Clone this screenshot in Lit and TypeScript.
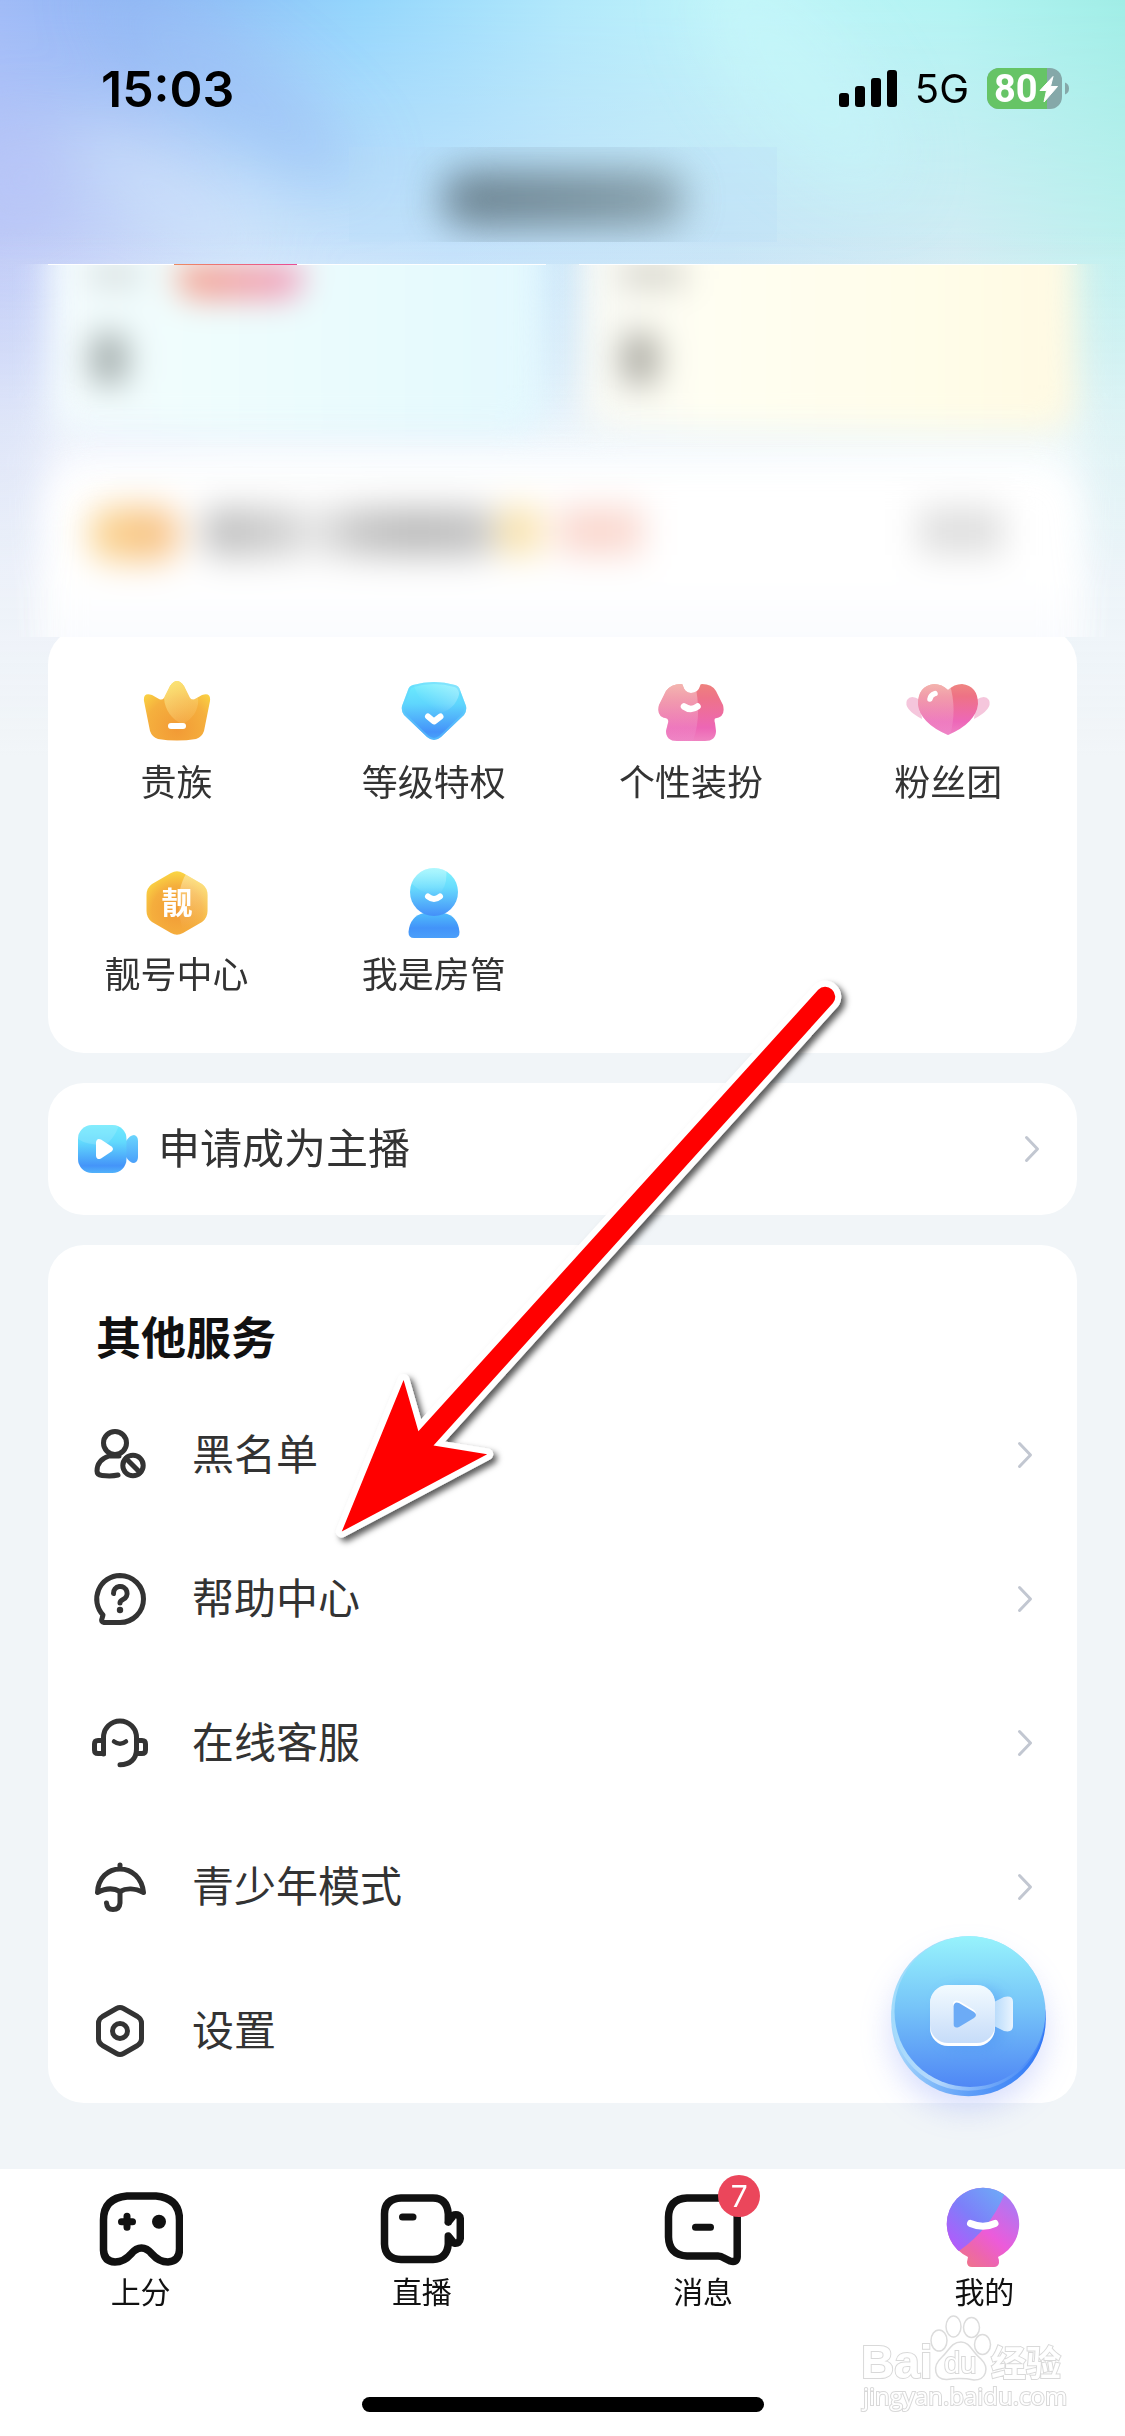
import { LitElement, html, svg, css, type TemplateResult } from "lit";
import { customElement } from "lit/decorators.js";

type Entry = { label: string; icon: TemplateResult };

const perks: Entry[] = [
  {
    label: "贵族",
    icon: html`<svg class="perk-icon" viewBox="0 0 84 84" aria-hidden="true">
      <defs>
        <radialGradient id="crownFill" cx="0.5" cy="0.72" r="0.62">
          <stop offset="0" stop-color="#f29a35" /><stop offset="0.6" stop-color="#f5b03e" /><stop offset="1" stop-color="#fbdc45" />
        </radialGradient>
        <linearGradient id="crownShine" x1="0.2" y1="0" x2="0.6" y2="1">
          <stop offset="0" stop-color="#fbea7e" /><stop offset="1" stop-color="#fbd88a" stop-opacity="0.15" />
        </linearGradient>
        <clipPath id="crownClip"><path d="M35 17Q42 7 49 17L55 29Q57 31.500 60 30L67 26Q76 23 75 32L69 62Q67 68 61 70Q42 73 23 70Q17 68 15 62L9 32Q8 23 17 26L24 30Q27 31.500 29 29Z" /></clipPath>
      </defs>
      <g clip-path="url(#crownClip)">
        <rect width="84" height="84" fill="url(#crownFill)" />
        <path d="M29 0V29C30 42 37 50 47 55C60 50 66 36 62 24V0Z" fill="url(#crownShine)" />
      </g>
      <rect x="33" y="54" width="18" height="6" rx="3" fill="#fff" />
    </svg>`,
  },
  {
    label: "等级特权",
    icon: html`<svg class="perk-icon" viewBox="0 0 84 84" aria-hidden="true">
      <defs>
        <linearGradient id="gemFill" x1="0" y1="0.15" x2="0" y2="0.9">
          <stop offset="0" stop-color="#6deefd" /><stop offset="0.35" stop-color="#5fd6fd" /><stop offset="0.8" stop-color="#4492f9" /><stop offset="1" stop-color="#4bb0fb" />
        </linearGradient>
        <linearGradient id="gemShine" x1="1" y1="0" x2="0.1" y2="0.9">
          <stop offset="0" stop-color="#fff" stop-opacity="0.45" /><stop offset="0.8" stop-color="#fff" stop-opacity="0" />
        </linearGradient>
        <clipPath id="gemClip"><path d="M21 16Q42 10 63 16Q67 17 68 21L74 37Q75 42 72 46L49 68Q42 74 35 68L12 46Q9 42 10 37L16 21Q17 17 21 16Z" /></clipPath>
      </defs>
      <g clip-path="url(#gemClip)">
        <rect width="84" height="84" fill="url(#gemFill)" />
        <path d="M20 10H68V20C67 32 60 41 48 44C34 40 24 28 20 10Z" fill="url(#gemShine)" />
        <path d="M21 16Q42 10 63 16Q67 17 68 21L74 37Q75 42 72 46L49 68Q42 74 35 68L12 46Q9 42 10 37L16 21Q17 17 21 16Z" fill="none" stroke="#62d2fd" stroke-width="4" opacity="0.45" />
      </g>
      <path d="M36 47.500L42 52.500L48.500 47.500" fill="none" stroke="#fff" stroke-width="6" stroke-linecap="round" stroke-linejoin="round" />
    </svg>`,
  },
  {
    label: "个性装扮",
    icon: html`<svg class="perk-icon" viewBox="0 0 84 84" aria-hidden="true">
      <defs>
        <linearGradient id="shirtFill" x1="0" y1="0.1" x2="0" y2="0.9">
          <stop offset="0" stop-color="#ee8878" /><stop offset="0.3" stop-color="#ee7388" /><stop offset="0.75" stop-color="#ed66b5" /><stop offset="1" stop-color="#f08cc4" />
        </linearGradient>
        <linearGradient id="shirtShine" x1="0" y1="0.1" x2="0" y2="1">
          <stop offset="0" stop-color="#f7d6c4" stop-opacity="0.75" /><stop offset="1" stop-color="#ee8bd0" stop-opacity="0.25" />
        </linearGradient>
        <clipPath id="shirtClip"><path d="M32 15Q34 15 34 17Q36 24 42 24Q49 24 51 17Q51 15 53 15Q63 15 67 22L74 36Q77 48 66 49.500Q65 51 66 54L67 62Q67 72 56 72H28Q17 72 17 62L19 54Q20 51 18 49.500Q7 48 10 36L17 22Q22 15 32 15Z" /></clipPath>
      </defs>
      <g clip-path="url(#shirtClip)">
        <rect width="84" height="84" fill="url(#shirtFill)" />
        <path d="M0 0H42C50 25 52 50 44 72H0Z" fill="url(#shirtShine)" />
      </g>
      <path d="M35 37.500Q42 42.500 48.500 37.500" fill="none" stroke="#fff" stroke-width="6.500" stroke-linecap="round" />
    </svg>`,
  },
  {
    label: "粉丝团",
    icon: html`<svg class="perk-icon" viewBox="0 0 84 84" aria-hidden="true">
      <defs>
        <linearGradient id="heartFill" x1="0" y1="0.1" x2="0" y2="0.85">
          <stop offset="0" stop-color="#ef9080" /><stop offset="0.3" stop-color="#ee7285" /><stop offset="0.7" stop-color="#ed67b8" /><stop offset="1" stop-color="#f08ac8" />
        </linearGradient>
        <linearGradient id="heartShine" x1="0" y1="0.1" x2="0" y2="1">
          <stop offset="0" stop-color="#f7d6c4" stop-opacity="0.7" /><stop offset="1" stop-color="#ee8bd0" stop-opacity="0.25" />
        </linearGradient>
        <clipPath id="heartClip"><path d="M42 21Q48 15 56 15Q72 17 72 35Q70 54 42 66Q14 54 12 35Q12 17 28 15Q36 15 42 21Z" /></clipPath>
      </defs>
      <path d="M14 31Q5 25 1 31Q-3 40 16 50ZM70 31Q79 25 83 31Q87 40 68 50Z" fill="#f5c6dc" />
      <g clip-path="url(#heartClip)">
        <rect width="84" height="84" fill="url(#heartFill)" />
        <path d="M0 0H38C48 22 51 44 43 70H0Z" fill="url(#heartShine)" />
      </g>
      <path d="M24 30Q24.500 26 29 24.500" fill="none" stroke="#fff" stroke-width="5.500" stroke-linecap="round" />
    </svg>`,
  },
  {
    label: "靓号中心",
    icon: html`<svg class="perk-icon" viewBox="0 0 84 84" aria-hidden="true">
      <defs>
        <radialGradient id="hexFill" cx="0.5" cy="0.6" r="0.5">
          <stop offset="0" stop-color="#f19b36" /><stop offset="0.6" stop-color="#f5ae3d" /><stop offset="1" stop-color="#fbdc45" />
        </radialGradient>
        <linearGradient id="hexShine" x1="0" y1="0" x2="0" y2="1">
          <stop offset="0.1" stop-color="#fff3c8" stop-opacity="0.5" /><stop offset="0.9" stop-color="#fff3c8" stop-opacity="0" />
        </linearGradient>
        <clipPath id="hexClip"><path d="M36 12Q42 8.500 48 12L67 23Q72.500 27 72.500 34V50Q72.500 57 67 61L48 72Q42 75.500 36 72L17 61Q11.500 57 11.500 50V34Q11.500 27 17 23L36 12Z" /></clipPath>
      </defs>
      <g clip-path="url(#hexClip)">
        <rect width="84" height="84" fill="url(#hexFill)" />
        <path d="M53 10C42 25 40 50 50 74H84V10Z" fill="url(#hexShine)" />
      </g>
      <text class="hex-text" x="42" y="53" text-anchor="middle">靓</text>
    </svg>`,
  },
  {
    label: "我是房管",
    icon: html`<svg class="perk-icon" viewBox="0 0 84 84" aria-hidden="true">
      <defs>
        <linearGradient id="headFill" x1="0" y1="0" x2="0" y2="1">
          <stop offset="0" stop-color="#84f4fd" /><stop offset="0.4" stop-color="#68dcfd" /><stop offset="1" stop-color="#448ff9" />
        </linearGradient>
        <linearGradient id="torsoFill" x1="0" y1="0" x2="0" y2="1">
          <stop offset="0" stop-color="#50bdfc" /><stop offset="0.6" stop-color="#4293f9" /><stop offset="1" stop-color="#4b9ffa" />
        </linearGradient>
        <linearGradient id="headShine" x1="0" y1="0" x2="0" y2="1">
          <stop offset="0.1" stop-color="#fff" stop-opacity="0.4" /><stop offset="1" stop-color="#fff" stop-opacity="0" />
        </linearGradient>
        <clipPath id="headClip"><circle cx="42" cy="31" r="24" /></clipPath>
      </defs>
      <path d="M32 52H52Q66 55 67.500 71Q67.500 77 62 77H22Q16.500 77 16.500 71Q18 55 32 52Z" fill="url(#torsoFill)" />
      <circle cx="42" cy="31" r="24" fill="url(#headFill)" />
      <path d="M18 0H53Q58 24 46 34Q26 32 18 20Z" fill="url(#headShine)" clip-path="url(#headClip)" />
      <path d="M36 35.500Q42 40.500 48 35.500" fill="none" stroke="#fff" stroke-width="6" stroke-linecap="round" />
    </svg>`,
  },
];

const services: Entry[] = [
  {
    label: "黑名单",
    icon: svg`<circle cx="25" cy="18" r="11.500" /><path d="M20 31H29M19 31C10 34 7 40 7 46Q7 50 12 50.500Q22 51.500 28 50" /><circle cx="43" cy="40.500" r="10.200" /><path d="M36 33.500L50 47.500" />`,
  },
  {
    label: "帮助中心",
    icon: svg`<path d="M30 6.500A23.400 23.400 0 0 1 30 53.500H14Q10.500 53 12 49.500L13 46A23.500 23.500 0 0 1 30 6.500Z" /><path d="M23.500 24.500A6.800 6.800 0 1 1 33 30.500Q30 32 30 34" /><circle cx="30" cy="41" r="3.200" fill="#333" stroke="none" />`,
  },
  {
    label: "在线客服",
    icon: svg`<path d="M13.500 41V24.500A16.400 16.400 0 0 1 46.500 24.500V36C46.500 46 40 51.800 30 51.800" /><path d="M13.500 27.500H8Q4.500 27.500 4.500 31V37Q4.500 40.500 8 40.500H13.500M46.500 27.500H52Q55.500 27.500 55.500 31V37Q55.500 40.500 52 40.500H46.500" /><path d="M24 28.500Q30 33 36 28.500" stroke-width="4.500" />`,
  },
  {
    label: "青少年模式",
    icon: svg`<path d="M30 8V11M7.500 35.500C8 21 18 12 30 12S52 21 53.500 35.500C45 31 36 31 30 34.500C24 31 16 31 7.500 35.500Z" /><path d="M30 35V46Q29.500 52.500 23 52.500Q17 52.500 16.500 46" />`,
  },
  {
    label: "设置",
    icon: svg`<path d="M26.500 7.500Q30 5.500 33.500 7.500L47.500 15.500Q51.500 18 51.500 22V38Q51.500 42 47.500 44.500L33.500 52.500Q30 54.500 26.500 52.500L12.500 44.500Q8.500 42 8.500 38V22Q8.500 18 12.500 15.500Z" /><circle cx="30" cy="30" r="7.500" />`,
  },
];

const tabs: (Entry & { badge?: number })[] = [
  {
    label: "上分",
    icon: svg`<path d="M28 9H57Q80.500 11 80.500 33V63Q80 74.500 69 75Q60 75 53 67Q48 61 42.500 61T32 67Q25 75 16 75Q5 74.500 4.500 63V33Q4.500 11 28 9Z" /><path d="M22.500 34.700H33.500M28 29.200V40.200" stroke-width="7" /><circle cx="60" cy="34.700" r="7" fill="#111" stroke="none" />`,
  },
  {
    label: "直播",
    icon: svg`<path d="M68.300 35V27Q67 11 53 11H21Q4.500 12 4.500 27V57Q5 72 21 72.500H53Q67 72 68.300 57V49L74 56Q80 57 80.300 51V32Q80 27 74 28L68.300 35" /><path d="M22.500 30H33" stroke-width="7" />`,
  },
  {
    label: "消息",
    badge: 7,
    icon: svg`<path d="M58 11H26Q8 12 7.500 30V50Q8 68 26 69H57Q60 69 63 71L69 74Q76 76 76.200 70V28" /><path d="M34.500 40.300H49.500" stroke-width="7" />`,
  },
  {
    label: "我的",
    icon: svg`<defs>
        <linearGradient id="meCool" x1="0.1" y1="0.9" x2="0.9" y2="0.1"><stop offset="0" stop-color="#b559fa" /><stop offset="0.5" stop-color="#7d7ff9" /><stop offset="1" stop-color="#6fa6f7" /></linearGradient>
        <linearGradient id="meWarm" x1="0.2" y1="1" x2="0.9" y2="0.1"><stop offset="0" stop-color="#ef7684" /><stop offset="0.25" stop-color="#ed66ac" /><stop offset="0.5" stop-color="#ec5bda" /><stop offset="1" stop-color="#a67bf6" /></linearGradient>
        <clipPath id="meClip"><circle cx="41" cy="37" r="36.300" /></clipPath>
      </defs>
      <path d="M41 0.700A36.300 36.300 0 0 1 56 70Q57 72 57 76Q56 80 52 80H30Q25 80 25 75L26 70A36.300 36.300 0 0 1 41 0.700Z" fill="url(#meWarm)" stroke="none" />
      <path d="M0 0H65L62 8Q48 42 17 64H0Z" fill="url(#meCool)" stroke="none" clip-path="url(#meClip)" />
      <path d="M28.500 36.500Q41 42 53 36.500" stroke="#fff" stroke-width="7" />`,
  },
];

const chevron = html`<svg class="chevron" viewBox="0 0 16 28" aria-hidden="true"><path d="M2.500 2.500L13.500 14L2.500 25.500" /></svg>`;

@customElement("app-root")
export class AppRoot extends LitElement {
  static styles = css`
    :host {
      display: block;
      font-family: Inter, "Noto Sans CJK SC", sans-serif;
      color: #333;
    }
    * { box-sizing: border-box; }
    a { color: inherit; text-decoration: none; }
    button { font: inherit; color: inherit; border: 0; background: none; padding: 0; cursor: pointer; }
    h1, h2 { margin: 0; }
    .page {
      position: relative;
      display: flex;
      flex-direction: column;
      min-height: 100vh;
      overflow: hidden;
      background: #f1f5f8;
    }
    .sky { position: absolute; top: 0; left: 0; width: 100%; height: 1050px; }

    .top { position: relative; height: 264px; flex: none; }
    .status {
      display: flex;
      align-items: center;
      justify-content: space-between;
      height: 147px;
      padding: 30px 56px 0 101px;
      color: #000;
    }
    .clock { font-size: 50px; line-height: 60px; font-weight: 600; }
    .signals { display: flex; align-items: center; gap: 18px; }
    .bars { width: 58px; height: 37px; }
    .network { font-size: 40px; line-height: 48px; }
    .battery { width: 82px; height: 41px; overflow: visible; }
    .battery-text { font: 700 38px Roboto, sans-serif; fill: #fff; }
    .heading {
      width: 428px;
      height: 95px;
      margin: 0 auto;
      overflow: hidden;
      padding: 24px 92px 0;
      background: #b9ddf940;
    }
    .heading-blur { display: block; height: 56px; border-radius: 28px; background: linear-gradient(90deg, #52656f, #647982 60%, #7b9099); opacity: 0.8; filter: blur(20px); }

    .teaser {
      position: relative;
      flex: none;
      height: 373px;
      overflow: hidden;
      background: linear-gradient(90deg, transparent 20px, #fff 70px, #fff calc(100% - 70px), transparent calc(100% - 20px)) 0 120px / 100% 253px no-repeat;
    }
    .teaser-edge {
      position: absolute;
      z-index: 1;
      top: 0;
      left: 48px;
      right: 48px;
      height: 1px;
      background: linear-gradient(90deg, #fff 126px, #ee8a62 126px, #ea4c92 249px, #fff 249px, #fff 498px, transparent 498px, transparent 531px, #fff 531px);
    }
    .teaser { background: none; }
    .wash {
      position: absolute;
      inset: 130px 48px -40px;
      background: linear-gradient(#ffffff00, #ffffffb0 60px);
      filter: blur(20px);
    }
    .wallets { position: relative; display: flex; gap: 33px; padding: 0 48px; margin-top: -60px; filter: blur(16px); }
    .wallet { flex: 1; height: 228px; padding: 60px 42px 0; border-radius: 30px; }
    .wallet-blue { background: linear-gradient(90deg, #f4fbfd, #effdfd 30%, #e6fafd 80%, #e3f8fe); }
    .wallet-gold { background: linear-gradient(90deg, #f8f9f5, #fffef2 25%, #fffde9 70%, #fff9e2); }
    .wallet-row { display: flex; gap: 38px; height: 68px; }
    .wallet-name { width: 50px; height: 22px; background: #d5dcdc; }
    .wallet-gold .wallet-name { width: 64px; background: #cfcec6; }
    .wallet-tag { width: 124px; height: 34px; background: linear-gradient(90deg, #f59f85, #f09ac0); border-radius: 0 0 18px 18px; }
    .wallet-value { width: 38px; height: 54px; border-radius: 16px; background: #a5afae; }
    .wallet-gold .wallet-value { background: #afaea6; }
    .promo {
      position: relative;
      display: flex;
      align-items: flex-start;
      gap: 26px;
      height: 260px;
      margin: 36px 48px 0;
      padding: 39px 74px 0 42px;
      border-radius: 36px;
      background: linear-gradient(#fff 120px, #f8fafe 190px);
      filter: blur(17px);
    }
    .promo-tag { width: 88px; height: 54px; border-radius: 20px; background: linear-gradient(90deg, #fad690, #f7bd82); }
    .promo-text { width: 290px; height: 50px; margin-right: -20px; border-radius: 12px; background: linear-gradient(90deg, #bcbcbc, #d2d2d2 28%, #ebebeb 38%, #c8c8c8 52%, #bcbcbc 72%, #c6c6c6); }
    .promo-coin { width: 40px; height: 48px; margin-right: -8px; background: #f9e1a8; }
    .promo-amount { width: 84px; height: 48px; background: #fad8cf; }
    .promo-more { width: 84px; height: 48px; margin-left: auto; background: #dfdfdf; }

    .stack {
      position: relative;
      display: flex;
      flex-direction: column;
      gap: 30px;
      flex: none;
      padding: 0 48px 66px;
      margin-top: -9px;
    }
    .card { background: #fff; border-radius: 36px; }
    .perks {
      display: grid;
      grid-template-columns: repeat(4, 1fr);
      row-gap: 54px;
      padding: 41px 0 54px;
      clip-path: inset(9px 0 0 0);
    }
    .perk { display: flex; flex-direction: column; align-items: center; gap: 6px; font-size: 36px; line-height: 48px; }
    .perk-icon { width: 84px; height: 84px; overflow: visible; }
    .hex-text { font: 700 31px "Noto Sans CJK SC", sans-serif; fill: #fff; }

    .apply { display: flex; align-items: center; height: 132px; padding: 0 37px 0 30px; gap: 20px; font-size: 42px; line-height: 60px; }
    .apply-icon { width: 60px; height: 48px; }
    .label { flex: 1; }
    .chevron { width: 16px; height: 28px; fill: none; stroke: #c2c7d1; stroke-width: 3; stroke-linecap: round; stroke-linejoin: round; }

    .title { padding: 64px 48px 14px; font-size: 45px; line-height: 60px; font-weight: 700; color: #111; }
    .row { display: flex; align-items: center; gap: 42px; height: 144px; padding: 0 44px 0 42px; font-size: 42px; line-height: 60px; }
    .row-icon { width: 60px; height: 60px; fill: none; stroke: #333; stroke-width: 5; stroke-linecap: round; stroke-linejoin: round; }

    .tabs {
      position: relative;
      flex: 1;
      display: grid;
      grid-template-columns: repeat(4, 1fr);
      grid-template-rows: auto 1fr;
      padding-top: 18px;
      background: #fff;
      color: #111;
    }
    .tab { position: relative; display: flex; flex-direction: column; align-items: center; font-size: 30px; line-height: 42px; }
    .tab-icon { width: 84px; height: 84px; fill: none; stroke: #111; stroke-width: 7.500; stroke-linecap: round; stroke-linejoin: round; }
    .badge {
      position: absolute;
      top: -12px;
      left: calc(50% + 15px);
      width: 42px;
      height: 42px;
      border-radius: 50%;
      background: #eb465b;
      color: #fff;
      text-align: center;
    }
    .home-bar { grid-column: 1 / -1; align-self: end; justify-self: center; width: 402px; height: 15px; margin-bottom: 24px; border-radius: 8px; background: #000; }

    .fab { position: absolute; right: 60px; bottom: 326px; width: 192px; height: 192px; }
    .fab-art { width: 192px; height: 192px; display: block; overflow: visible; }
    .pointer { position: absolute; left: 325px; top: 970px; width: 540px; height: 590px; pointer-events: none; }
    .mark { position: absolute; right: 50px; bottom: 16px; width: 225px; height: 110px; overflow: visible; pointer-events: none; }
    .mark-text { fill: #fff; stroke: #d9d9d9; stroke-width: 2; paint-order: stroke; }
    .mark-latin { font: 700 46px "Liberation Sans", sans-serif; }
    .mark-du { font: 400 29px "Liberation Sans", sans-serif; }
    .mark-cjk { font: 700 35px "Noto Sans CJK SC", sans-serif; }
    .mark-url { font: 400 24px "Open Sans", sans-serif; }
  `;

  private renderSky() {
    return html`<svg class="sky" viewBox="0 0 1125 1050" preserveAspectRatio="none" aria-hidden="true">
      <defs>
        <linearGradient id="skyLow" x1="0" x2="1" y1="0" y2="0">
          <stop offset="0" stop-color="#c2cdf8" /><stop offset="0.1" stop-color="#c9d6f9" /><stop offset="0.22" stop-color="#cfe5fb" /><stop offset="0.4" stop-color="#c4e2fb" /><stop offset="0.65" stop-color="#c8e5f7" /><stop offset="0.85" stop-color="#d2ecf4" /><stop offset="1" stop-color="#c0f1ef" />
        </linearGradient>
        <linearGradient id="skyHigh" x1="0" x2="1" y1="0" y2="0">
          <stop offset="0" stop-color="#a0bbf7" /><stop offset="0.12" stop-color="#8fb6f4" /><stop offset="0.32" stop-color="#93d5fc" /><stop offset="0.5" stop-color="#b1e8fb" /><stop offset="0.66" stop-color="#c0f5f9" /><stop offset="0.85" stop-color="#b2f3f2" /><stop offset="1" stop-color="#a0ede6" />
        </linearGradient>
        <linearGradient id="skyMask" x1="0" x2="0" y1="0" y2="1"><stop offset="0" stop-color="#fff" /><stop offset="1" stop-color="#000" /></linearGradient>
        <mask id="skyTop"><rect width="1125" height="260" fill="url(#skyMask)" /></mask>
        <linearGradient id="skyFade" x1="0" x2="0" y1="0" y2="1">
          <stop offset="0.22" stop-color="#f1f5f9" stop-opacity="0" /><stop offset="0.28" stop-color="#f1f5f9" stop-opacity="0.15" /><stop offset="0.4" stop-color="#f1f5f9" stop-opacity="0.6" /><stop offset="0.56" stop-color="#f0f4f9" stop-opacity="0.94" /><stop offset="0.72" stop-color="#f1f5f8" />
        </linearGradient>
        <filter id="skySoft" x="-50%" y="-50%" width="200%" height="200%"><feGaussianBlur stdDeviation="32" /></filter>
      </defs>
      <rect width="1125" height="1050" fill="url(#skyLow)" />
      <rect width="1125" height="260" fill="url(#skyHigh)" mask="url(#skyTop)" />
      <g filter="url(#skySoft)">
        <ellipse cx="230" cy="85" rx="160" ry="34" transform="rotate(37 230 85)" fill="#9bbff5" opacity="0.75" />
        <ellipse cx="170" cy="200" rx="120" ry="36" transform="rotate(35 170 200)" fill="#d0e3fb" opacity="0.7" />
        <ellipse cx="20" cy="180" rx="50" ry="60" fill="#b8c4f7" opacity="0.7" />
        <ellipse cx="800" cy="80" rx="140" ry="50" transform="rotate(50 800 80)" fill="#c6f6fa" opacity="0.6" />
      </g>
      <rect width="1125" height="1050" fill="url(#skyFade)" />
    </svg>`;
  }

  private renderFab() {
    return html`<button class="fab" aria-label="开播">
      <svg class="fab-art" viewBox="0 0 192 192" aria-hidden="true">
        <defs>
          <linearGradient id="fabFace" x1="0" y1="0" x2="0" y2="1"><stop offset="0" stop-color="#97f3fc" /><stop offset="0.5" stop-color="#74c1f8" /><stop offset="1" stop-color="#4f87f5" /></linearGradient>
          <linearGradient id="fabSide" x1="0" y1="0" x2="1" y2="0"><stop offset="0" stop-color="#a7d8fb" /><stop offset="0.5" stop-color="#5f9ff8" /><stop offset="1" stop-color="#2f77f5" /></linearGradient>
          <linearGradient id="fabRim" x1="0" y1="0.3" x2="1" y2="0.8"><stop offset="0" stop-color="#9fdcfb" /><stop offset="0.5" stop-color="#b5d8fc" /><stop offset="1" stop-color="#5c98f7" stop-opacity="0.3" /></linearGradient>
          <linearGradient id="fabBody" x1="0" y1="0" x2="0" y2="1"><stop offset="0" stop-color="#f3fbff" /><stop offset="1" stop-color="#c6dcf9" /></linearGradient>
          <linearGradient id="fabLens" x1="0" y1="0" x2="1" y2="0"><stop offset="0" stop-color="#b8dbfb" /><stop offset="1" stop-color="#e9f4fe" /></linearGradient>
          <filter id="fabGlow" x="-30%" y="-30%" width="160%" height="160%"><feGaussianBlur stdDeviation="16" /></filter>
          <filter id="fabShade" x="-30%" y="-30%" width="160%" height="160%"><feGaussianBlur stdDeviation="7" /></filter>
          <clipPath id="fabClip"><circle cx="95.500" cy="95" r="77" /></clipPath>
        </defs>
        <circle cx="95" cy="114" r="76" fill="#8a9cf7" opacity="0.36" filter="url(#fabGlow)" />
        <circle cx="95.500" cy="101" r="77.300" fill="url(#fabSide)" />
        <circle cx="95.500" cy="95.500" r="77.300" fill="url(#fabRim)" />
        <circle cx="97" cy="93.500" r="75.500" fill="url(#fabFace)" clip-path="url(#fabClip)" />
        <rect x="66" y="70" width="64" height="60" rx="18" fill="#4a8df3" opacity="0.4" filter="url(#fabShade)" />
        <path d="M121 84L131 79Q140 77 140 84V108Q140 115 131 113L121 108Z" fill="url(#fabLens)" />
        <rect x="57" y="68" width="65" height="60" rx="18" fill="#fff" />
        <rect x="57" y="67" width="65" height="58" rx="18" fill="url(#fabBody)" />
        <path d="M80 86Q81 81 86 83L101 92Q105 96 101 99L86 108Q81 110 80 105Z" fill="#fff" />
        <path d="M80.500 88Q81.500 83 86 85L101 94Q105 97 101 100L86 109Q81 111 80.500 106Z" fill="#6cabf6" />
      </svg>
    </button>`;
  }

  render() {
    return html`<div class="page">
      ${this.renderSky()}
      <header class="top">
        <div class="status">
          <span class="clock">15:03</span>
          <div class="signals">
            <svg class="bars" viewBox="0 0 58 37" aria-hidden="true"><rect y="23" width="10" height="14" rx="3" /><rect x="16" y="16" width="10" height="21" rx="3" /><rect x="32" y="8" width="10" height="29" rx="3" /><rect x="48" width="10" height="37" rx="3" /></svg>
            <span class="network">5G</span>
            <svg class="battery" viewBox="0 0 82 41" aria-label="80%">
              <defs><clipPath id="cell"><rect width="75" height="41" rx="12" /></clipPath></defs>
              <g clip-path="url(#cell)"><rect width="75" height="41" fill="#85a8a9" /><rect width="60" height="41" fill="#66c466" /></g>
              <path d="M78 14.500Q82 16 82 20.500T78 26.500Z" fill="#85a8a9" />
              <text class="battery-text" x="7" y="34">80</text>
              <path d="M66 8.500L53 22.500H59.500L57 34L70.500 18.500H63.500Z" fill="#fff" stroke="#fff" stroke-linejoin="round" />
            </svg>
          </div>
        </div>
        <div class="heading"><span class="heading-blur"></span></div>
      </header>

      <div class="teaser" aria-hidden="true">
        <div class="teaser-edge"></div>
        <div class="wash"></div>
        <div class="wallets">
          <div class="wallet wallet-blue"><div class="wallet-row"><div class="wallet-name"></div><div class="wallet-tag"></div></div><div class="wallet-value"></div></div>
          <div class="wallet wallet-gold"><div class="wallet-row"><div class="wallet-name"></div></div><div class="wallet-value"></div></div>
        </div>
        <div class="promo">
          <div class="promo-tag"></div><div class="promo-text"></div><div class="promo-coin"></div><div class="promo-amount"></div><div class="promo-more"></div>
        </div>
      </div>

      <main class="stack">
        <section class="card perks">
          ${perks.map((p) => html`<a class="perk" href="#">${p.icon}<span>${p.label}</span></a>`)}
        </section>
        <a class="card apply" href="#">
          <svg class="apply-icon" viewBox="0 0 60 48" aria-hidden="true">
            <defs>
              <linearGradient id="camBody" x1="0" y1="0" x2="0" y2="1"><stop offset="0" stop-color="#6feafd" /><stop offset="0.35" stop-color="#62dafd" /><stop offset="0.85" stop-color="#4494f9" /><stop offset="1" stop-color="#51b2fb" /></linearGradient>
              <linearGradient id="camLens" x1="0" y1="0" x2="0" y2="1"><stop offset="0" stop-color="#6ad5fd" /><stop offset="1" stop-color="#4aa0fa" /></linearGradient>
            </defs>
            <path d="M48 16Q52 10 56 10Q60 11 60 16V32Q60 37 56 38Q52 38 48 32Z" fill="url(#camLens)" />
            <rect width="48.500" height="48" rx="14" fill="url(#camBody)" />
            <path d="M14 0H35Q38 0 40.500 1.500Q36 14 27 20Q8 20 0 14Q0 0 14 0Z" fill="#fff" opacity="0.14" />
            <path d="M18 17Q19 12.500 23 14.500L33.500 21.500Q36.500 24 33.500 26.500L23 33.500Q19 35.500 18 31Z" fill="#fff" />
          </svg>
          <span class="label">申请成为主播</span>${chevron}
        </a>
        <section class="card">
          <h2 class="title">其他服务</h2>
          ${services.map(
            (s, i) => html`<a class="row" href="#">
              <svg class="row-icon" viewBox="0 0 60 60" aria-hidden="true">${s.icon}</svg>
              <span class="label">${s.label}</span>${i < services.length - 1 ? chevron : null}
            </a>`
          )}
        </section>
      </main>

      <nav class="tabs">
        ${tabs.map(
          (t) => html`<button class="tab">
            <svg class="tab-icon" viewBox="0 0 84 84" aria-hidden="true">${t.icon}</svg>
            <span>${t.label}</span>${t.badge ? html`<span class="badge">${t.badge}</span>` : null}
          </button>`
        )}
        <div class="home-bar"></div>
      </nav>

      ${this.renderFab()}

      <svg class="pointer" viewBox="325 970 540 590" aria-hidden="true">
        <defs><filter id="lift" x="-10%" y="-10%" width="120%" height="120%"><feDropShadow dx="4" dy="4" stdDeviation="3" flood-color="#000" flood-opacity="0.65" /></filter></defs>
        <g filter="url(#lift)">
          <path d="M341.800 1531.400L403.600 1380L418.400 1431.300L818.200 989.700A10 10 0 0 1 833 1003.100L433.500 1445.600L487.200 1454.300Z" fill="#f00" stroke="#fff" stroke-width="12" stroke-linejoin="round" paint-order="stroke" />
        </g>
      </svg>

      <svg class="mark" viewBox="850 2310 225 110" aria-label="Baidu 经验">
        <text class="mark-text mark-latin" x="861" y="2378">Bai</text>
        <g fill="#fff" stroke="#dcdcdc" stroke-width="1.500">
          <ellipse cx="939" cy="2340.500" rx="8" ry="10.500" /><ellipse cx="953.500" cy="2326.500" rx="7.500" ry="10.500" /><ellipse cx="971.500" cy="2327.500" rx="8" ry="10" /><ellipse cx="982.500" cy="2344.500" rx="8" ry="10" />
          <path d="M961 2342C951 2342 949 2351 942 2357C931 2367 935 2380 947 2379.500Q961 2377.500 974 2380C986 2380 990 2368 981 2359C972 2352 970 2342 961 2342Z" />
        </g>
        <text class="mark-text mark-du" x="944" y="2373">du</text>
        <text class="mark-text mark-cjk" x="991" y="2376">经验</text>
        <text class="mark-text mark-url" x="863" y="2405">jingyan.baidu.com</text>
      </svg>
    </div>`;
  }
}
